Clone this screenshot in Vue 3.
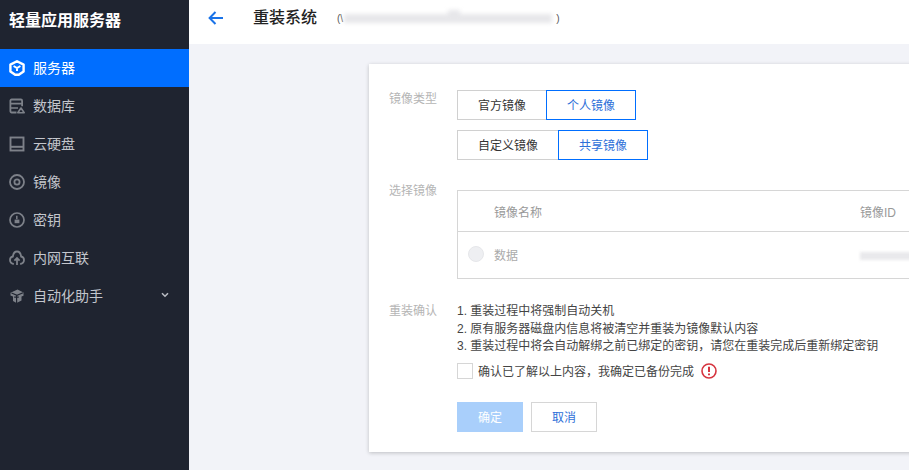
<script setup>
const navItems = [
  { label: '服务器', icon: 'server', active: true },
  { label: '数据库', icon: 'db' },
  { label: '云硬盘', icon: 'disk' },
  { label: '镜像', icon: 'image' },
  { label: '密钥', icon: 'key' },
  { label: '内网互联', icon: 'net' },
  { label: '自动化助手', icon: 'auto', arrow: true }
]
const notes = [
  '1. 重装过程中将强制自动关机',
  '2. 原有服务器磁盘内信息将被清空并重装为镜像默认内容',
  '3. 重装过程中将会自动解绑之前已绑定的密钥，请您在重装完成后重新绑定密钥'
]
</script>

<template>
  <div class="app">
    <aside class="side">
      <div class="brand">轻量应用服务器</div>
      <nav class="nav">
        <div v-for="item in navItems" :key="item.label" class="nav-item" :class="{ active: item.active }">
          <svg class="nav-icon" width="16" height="16" viewBox="0 0 16 16" fill="none" stroke="currentColor" stroke-width="2">
            <template v-if="item.icon === 'server'">
              <path d="M8 1.2 14.6 4.6v6.8L9.8 14.8H6.2L1.4 11.4V4.6z" stroke-width="2.4" stroke-linejoin="round" />
              <path d="M4.6 6 8 8 11.4 6M8 8v3" stroke-width="2" />
            </template>
            <template v-else-if="item.icon === 'db'">
              <path d="M7.5 14.5H2.6A1.2 1.2 0 0 1 1.4 13.3V2.7A1.2 1.2 0 0 1 2.6 1.5h9.3a1.2 1.2 0 0 1 1.2 1.2v5.6" stroke-width="1.8" />
              <path d="M1.5 5.6h11.5M1.5 10h7.5" stroke-width="1.6" />
              <path d="M12 10 15.2 14.7H8.8z" stroke-width="1.6" stroke-linejoin="round" />
            </template>
            <template v-else-if="item.icon === 'disk'">
              <rect x="1.5" y="1.5" width="13" height="13" stroke-width="1.9" />
              <path d="M2 10.8h12" stroke-width="2" />
            </template>
            <template v-else-if="item.icon === 'image'">
              <circle cx="8" cy="8" r="7" stroke-width="1.8" />
              <circle cx="8" cy="8" r="2.6" stroke-width="1.8" />
            </template>
            <template v-else-if="item.icon === 'key'">
              <circle cx="8" cy="8" r="7" stroke-width="1.7" />
              <path d="M7.8 3.8v3.4" stroke-width="1.5" />
              <rect x="5.6" y="7.6" width="4.8" height="3.6" fill="currentColor" stroke="none" />
            </template>
            <template v-else-if="item.icon === 'net'">
              <path d="M4.8 14C2.6 13.6 1 12 1 10c0-1.9 1.3-3.2 2.9-3.5C4.3 3.4 6 1.5 8 1.5s3.7 1.9 4.1 5c1.6.3 2.9 1.6 2.9 3.5 0 2-1.6 3.6-3.8 4" stroke-width="1.8" />
              <path d="M8 15V8.2M5.4 10.6 8 8l2.6 2.6" stroke-width="1.8" />
            </template>
            <template v-else>
              <path d="M1.5 4.8 8.5 1.5 14.5 4.5v3.2L12.5 8.6v4L7.5 15 4 13V8.6L1.5 7.4z" fill="currentColor" stroke="none" />
              <path d="M2.5 5 8 7.4l6-2.6M7.6 7.5V15M5.2 9.2h4.6" stroke="#1f2430" stroke-width="1.2" />
            </template>
          </svg>
          <span class="nav-label">{{ item.label }}</span>
          <svg v-if="item.arrow" class="caret" width="8" height="6" viewBox="0 0 8 6" fill="none" stroke="currentColor" stroke-width="1.6">
            <path d="M1 1.2 4 4.2 7 1.2" />
          </svg>
        </div>
      </nav>
    </aside>

    <main class="main">
      <header class="top">
        <svg class="back" width="16" height="14" viewBox="0 0 16 14" fill="none" stroke="#1a73e8" stroke-width="2">
          <path d="M15 7H2M7.5 1 1.6 7l5.9 6" />
        </svg>
        <h1 class="title">重装系统</h1>
        <div class="instance">
          <span>(\</span>
          <span class="smudge"><span class="bump"></span></span>
          <span>)</span>
        </div>
      </header>

      <section class="content">
        <div class="card">
          <div class="form-row type-row">
            <div class="label">镜像类型</div>
            <div class="field stack">
              <div class="seg">
                <button class="seg-btn first">官方镜像</button>
                <button class="seg-btn wide on">个人镜像</button>
              </div>
              <div class="seg">
                <button class="seg-btn wider">自定义镜像</button>
                <button class="seg-btn wide on">共享镜像</button>
              </div>
            </div>
          </div>

          <div class="form-row pick-row">
            <div class="label">选择镜像</div>
            <div class="field table">
              <div class="thead">
                <span class="col-name">镜像名称</span>
                <span class="col-id">镜像ID</span>
              </div>
              <div class="tbody">
                <span class="radio"></span>
                <span class="col-name data">数据</span>
                <span class="id-smudge"></span>
              </div>
            </div>
          </div>

          <div class="form-row confirm-row">
            <div class="label">重装确认</div>
            <div class="field">
              <p v-for="n in notes" :key="n" class="note">{{ n }}</p>
              <label class="check">
                <span class="box"></span>
                <span>确认已了解以上内容，我确定已备份完成</span>
                <svg class="warn" width="16" height="16" viewBox="0 0 16 16" fill="none">
                  <circle cx="8" cy="8" r="7" stroke="#d6343f" stroke-width="1.6" />
                  <path d="M8 3.8v5.2M8 10.4v1.8" stroke="#d6343f" stroke-width="2" />
                </svg>
              </label>
              <div class="actions">
                <button class="btn primary">确定</button>
                <button class="btn plain">取消</button>
              </div>
            </div>
          </div>
        </div>
      </section>
    </main>
  </div>
</template>

<style>
html, body { margin: 0; background: #f2f3f8; overflow: hidden; }
</style>

<style scoped>
.app {
  display: flex;
  width: 909px;
  height: 470px;
  overflow: hidden;
  font-family: "Liberation Sans", "Noto Sans CJK SC", sans-serif;
  font-size: 12px;
  color: #333;
}
.side {
  flex: 0 0 189px;
  background: #1f2430;
  color: #c3c6cc;
}
.brand {
  height: 49px;
  padding: 12px 0 0 9px;
  box-sizing: border-box;
  font-size: 16px;
  line-height: 18px;
  font-weight: 700;
  color: #fff;
}
.nav-item {
  display: flex;
  align-items: center;
  height: 38px;
  padding: 0 20px 0 9px;
  font-size: 14px;
}
.nav-item.active { background: #006eff; color: #fff; }
.nav-icon { flex: none; color: #7d8189; }
.active .nav-icon { color: #fff; }
.nav-label { margin-left: 8px; padding-bottom: 2px; }
.caret { margin-left: auto; margin-bottom: 2px; color: #b8bbc2; }
.main { flex: 1; min-width: 0; display: flex; flex-direction: column; background: #f2f3f8; }
.top {
  flex: 0 0 44px;
  display: flex;
  align-items: center;
  padding: 0 0 8px 19px;
  box-sizing: border-box;
  background: #fff;
}
.title { margin: 0 0 0 29px; font-size: 16px; line-height: 24px; font-weight: 500; color: #222; }
.instance { display: flex; align-items: center; margin-left: 20px; font-size: 10px; color: #555; }
.smudge {
  position: relative;
  width: 208px;
  height: 9px;
  margin: 0 4px 0 1px;
  background: #e7e7ea;
  filter: blur(2px);
}
.bump {
  position: absolute;
  left: 104px;
  top: -4px;
  width: 12px;
  height: 6px;
  background: #e7e7ea;
}
.content { flex: 1; padding: 20px 0 18px 180px; min-height: 0; }
.card {
  width: 640px;
  height: 388px;
  box-sizing: border-box;
  padding: 26px 20px 0;
  background: #fff;
  box-shadow: 0 1px 4px rgba(0, 0, 0, 0.22);
}
.form-row { display: flex; }
.label { flex: 0 0 68px; line-height: 18px; color: #b5b5b5; }
.field { flex: 1; min-width: 0; }
.stack { display: flex; flex-direction: column; gap: 10px; }
.seg { display: flex; }
.seg-btn {
  height: 30px;
  box-sizing: border-box;
  padding: 0 0 2px;
  border: 1px solid #d0d0d0;
  border-right: 0;
  background: #fff;
  font: inherit;
  color: #333;
}
.seg-btn.first { width: 89px; }
.seg-btn.wide { width: 90px; }
.seg-btn.wider { width: 101px; }
.seg-btn.on { border: 1px solid #006eff; color: #2d6fd8; }
.pick-row { margin-top: 22px; }
.table { margin-top: 8px; border: 1px solid #d6d6d6; border-right: 0; height: 89px; box-sizing: border-box; color: #999; position: relative; }
.thead, .tbody { position: relative; display: flex; align-items: center; }
.thead { height: 40px; border-bottom: 1px solid #d6d6d6; }
.tbody { height: 44px; }
.col-name { margin-left: 36px; }
.col-id { position: absolute; left: 402px; white-space: nowrap; }
.radio {
  position: absolute;
  left: 10px;
  top: 14px;
  width: 16px;
  height: 16px;
  border-radius: 50%;
  background: #eeeff2;
  border: 1px solid #e6e7ea;
  box-sizing: border-box;
}
.data { color: #aaa; }
.id-smudge {
  position: absolute;
  left: 402px;
  top: 20px;
  width: 60px;
  height: 8px;
  background: #e9e9ec;
  filter: blur(1.5px);
}
.confirm-row { margin-top: 23px; }
.note { margin: 0; height: 17.5px; line-height: 18px; color: #444; white-space: nowrap; }
.check { display: flex; align-items: center; margin-top: 7px; height: 18px; color: #444; }
.box { width: 16px; height: 16px; box-sizing: border-box; margin-right: 5px; border: 1px solid #d6d6d6; background: #fff; }
.warn { margin-left: 7px; }
.actions { display: flex; gap: 8px; margin-top: 22px; }
.btn { height: 30px; box-sizing: border-box; padding: 0; font: inherit; }
.primary { width: 66px; border: 0; background: #a9cffb; color: #fff; }
.plain { width: 66px; border: 1px solid #d6d6d6; background: #fff; color: #2d6fd8; }
</style>
